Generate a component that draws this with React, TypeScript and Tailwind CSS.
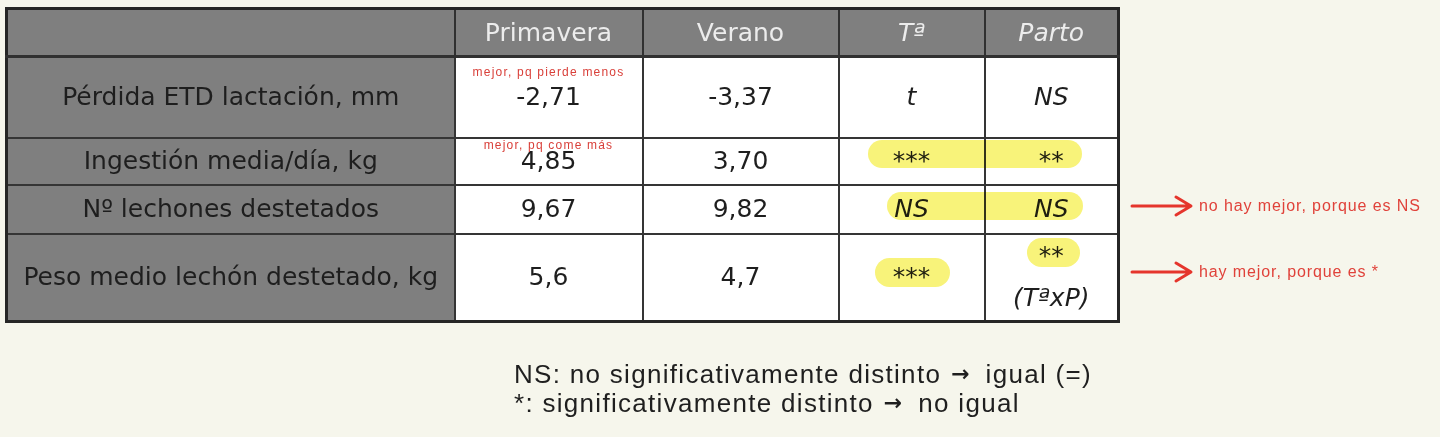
import React from "react";

const Arrow = () => (
  <svg width="64" height="24" viewBox="0 0 64 24" className="shrink-0">
    <path
      d="M2 12 H60 M46 3 L61 12 L46 21"
      stroke="#e5352c"
      strokeWidth="3"
      fill="none"
      strokeLinecap="round"
      strokeLinejoin="round"
    />
  </svg>
);

export default function App() {
  return (
    <div className="w-[1440px] h-[437px] bg-[#f6f6ec] pl-[5px] pt-[7px] font-['DejaVu_Sans',sans-serif] text-[#1e1e1e] overflow-hidden">
      <div className="flex">
        {/* table + highlighter marks */}
        <div className="relative">
          <table className="table-fixed border-collapse border-[3px] border-[#262626] text-[25px] leading-[30px]">
            <colgroup>
              <col className="w-[448px]" />
              <col className="w-[188px]" />
              <col className="w-[196px]" />
              <col className="w-[146px]" />
              <col className="w-[134px]" />
            </colgroup>
            <thead>
              <tr className="h-[48px] bg-[#7f7f7f] text-[#ececec]">
                <th className="border-2 border-b-[3px] border-[#303030] font-normal"></th>
                <th className="border-2 border-b-[3px] border-[#303030] font-normal">Primavera</th>
                <th className="border-2 border-b-[3px] border-[#303030] font-normal">Verano</th>
                <th className="border-2 border-b-[3px] border-[#303030] font-normal italic">Tª</th>
                <th className="border-2 border-b-[3px] border-[#303030] font-normal italic">Parto</th>
              </tr>
            </thead>
            <tbody className="text-center">
              <tr className="h-[81px]">
                <td className="border-2 border-[#353535] bg-[#7f7f7f]">Pérdida ETD lactación, mm</td>
                <td className="relative border-2 border-[#353535] bg-white">
                  <span className="absolute left-0 right-0 top-[7px] text-center font-['Liberation_Sans',sans-serif] text-[12px] leading-[14px] tracking-[1.2px] text-[#d9403a]">
                    mejor, pq pierde menos
                  </span>
                  -2,71
                </td>
                <td className="border-2 border-[#353535] bg-white">-3,37</td>
                <td className="border-2 border-[#353535] bg-white italic">t</td>
                <td className="border-2 border-[#353535] bg-white italic">NS</td>
              </tr>
              <tr className="h-[47px]">
                <td className="border-2 border-[#353535] bg-[#7f7f7f]">Ingestión media/día, kg</td>
                <td className="relative border-2 border-[#353535] bg-white">
                  <span className="absolute left-0 right-0 top-0 text-center font-['Liberation_Sans',sans-serif] text-[12px] leading-[12px] tracking-[1.2px] text-[#d9403a]">
                    mejor, pq come más
                  </span>
                  4,85
                </td>
                <td className="border-2 border-[#353535] bg-white">3,70</td>
                <td className="border-2 border-[#353535] bg-white italic">***</td>
                <td className="border-2 border-[#353535] bg-white italic">**</td>
              </tr>
              <tr className="h-[49px]">
                <td className="border-2 border-[#353535] bg-[#7f7f7f]">Nº lechones destetados</td>
                <td className="border-2 border-[#353535] bg-white">9,67</td>
                <td className="border-2 border-[#353535] bg-white">9,82</td>
                <td className="border-2 border-[#353535] bg-white italic">NS</td>
                <td className="border-2 border-[#353535] bg-white italic">NS</td>
              </tr>
              <tr className="h-[88px]">
                <td className="border-2 border-[#353535] bg-[#7f7f7f]">Peso medio lechón destetado, kg</td>
                <td className="border-2 border-[#353535] bg-white">5,6</td>
                <td className="border-2 border-[#353535] bg-white">4,7</td>
                <td className="border-2 border-[#353535] bg-white italic">***</td>
                <td className="border-2 border-[#353535] bg-white italic">
                  <div className="flex flex-col items-center gap-[12px]">
                    <span>**</span>
                    <span>(TªxP)</span>
                  </div>
                </td>
              </tr>
            </tbody>
          </table>

          {/* highlighter marks */}
          <div className="absolute left-[863px] top-[133px] w-[214px] h-[28px] rounded-full bg-[#f8f37a] mix-blend-multiply" />
          <div className="absolute left-[882px] top-[185px] w-[196px] h-[28px] rounded-full bg-[#f8f37a] mix-blend-multiply" />
          <div className="absolute left-[870px] top-[251px] w-[75px] h-[29px] rounded-full bg-[#f8f37a] mix-blend-multiply" />
          <div className="absolute left-[1022px] top-[231px] w-[53px] h-[29px] rounded-full bg-[#f8f37a] mix-blend-multiply" />
        </div>

        {/* side notes */}
        <div className="flex flex-col pl-[10px] font-['Liberation_Sans',sans-serif] text-[16px] tracking-[0.9px] text-[#e0423a]">
          <div className="h-[176px]" />
          <div className="h-[49px] flex items-center gap-[5px] pb-[4px]">
            <Arrow />
            <span>no hay mejor, porque es NS</span>
          </div>
          <div className="h-[88px] flex items-center gap-[5px] pb-[8px]">
            <Arrow />
            <span>hay mejor, porque es *</span>
          </div>
        </div>
      </div>

      <div className="ml-[509px] mt-[37px] font-['Liberation_Sans',sans-serif] text-[26px] leading-[29px] tracking-[1.3px] text-[#1f1f1f]">
        <p>
          NS: no significativamente distinto
          <span className="ml-[10px] mr-[16px] font-['DejaVu_Sans',sans-serif] text-[22px] leading-[0] font-bold tracking-normal align-[2px]">→</span>
          igual (=)
        </p>
        <p>
          *: significativamente distinto
          <span className="ml-[10px] mr-[16px] font-['DejaVu_Sans',sans-serif] text-[22px] leading-[0] font-bold tracking-normal align-[2px]">→</span>
          no igual
        </p>
      </div>
    </div>
  );
}
